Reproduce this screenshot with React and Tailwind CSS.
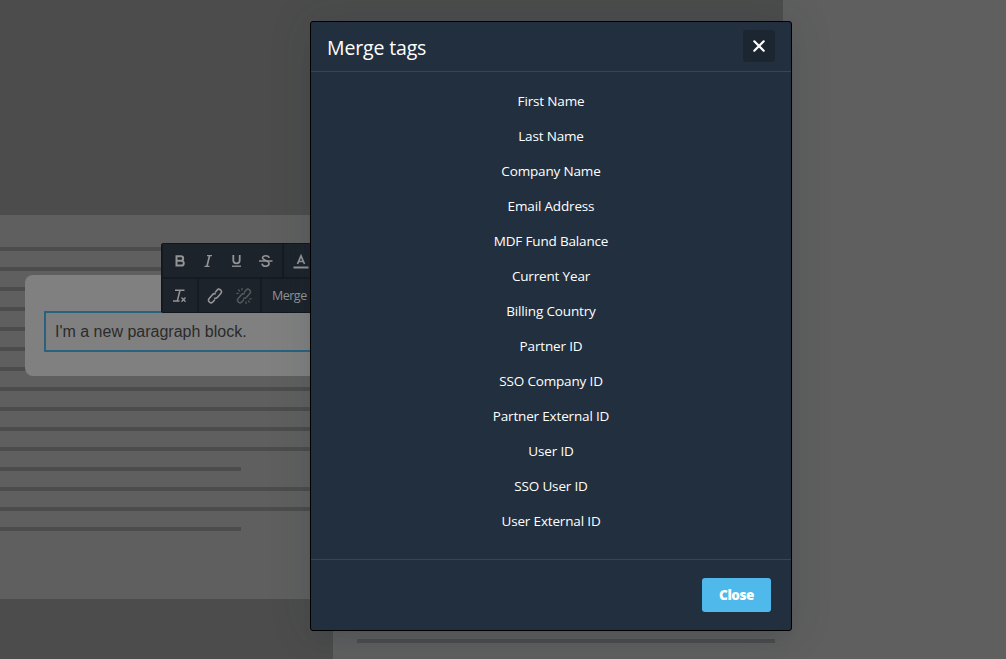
import React from 'react';

const tags = [
  'First Name',
  'Last Name',
  'Company Name',
  'Email Address',
  'MDF Fund Balance',
  'Current Year',
  'Billing Country',
  'Partner ID',
  'SSO Company ID',
  'Partner External ID',
  'User ID',
  'SSO User ID',
  'User External ID',
];

const lineWidths = Array.from({ length: 15 }, (_, i) => (i === 11 || i === 14 ? 241 : 450));

function Group({ className, children }) {
  return <div className={`flex h-full shrink-0 items-center bg-[#1c232b] text-[#929496] ${className}`}>{children}</div>;
}

const stroke = { fill: 'none', stroke: 'currentColor', strokeWidth: 1.6 };

function Icon({ children, className = '' }) {
  return (
    <svg width="16" height="16" viewBox="0 0 16 16" className={`shrink-0 ${className}`} {...stroke}>
      {children}
    </svg>
  );
}

function ChainLink() {
  return (
    <g transform="rotate(-50 8 8)" strokeWidth="1.6">
      <path d="M10 7.300C9.600 5.800 8.600 5.200 7.400 5.200H2.300a2.500 2.500 0 0 0 0 5h2.900" />
      <path d="M6 8.700c.4 1.500 1.400 2.100 2.600 2.100h5.100a2.500 2.500 0 0 0 0-5h-2.900" />
    </g>
  );
}

function Toolbar() {
  return (
    <div className="absolute left-[161px] top-[243px] flex h-[70px] w-[260px] flex-col gap-[2px] overflow-hidden rounded-[2px] border border-[#11161b] bg-[#151b21] pl-px">
      <div className="flex h-[33px] gap-[2px]">
        <Group className="w-[119px] gap-[12.500px] pl-[9px]">
          <Icon><path strokeWidth="2" d="M4.500 2.200v11.300M4.500 3.200h4.400a2.250 2.250 0 0 1 0 4.500h-4.400M4.500 7.800h4.900a2.350 2.350 0 0 1 0 4.700H4.500" /></Icon>
          <Icon><path strokeWidth="1.200" d="M6 2.600h5M3.500 13.400h5" /><path strokeWidth="1.700" d="M8.600 2.600L5.900 13.400" /></Icon>
          <Icon><path d="M4.300 2v5.200a3.200 3.200 0 0 0 6.400 0V2" strokeWidth="1.800" /><path d="M3 13.200h9" strokeWidth="1.400" /></Icon>
          <Icon><path d="M11.100 5c-.2-1.600-1.600-2.300-3.300-2.300-1.900 0-3.300.9-3.300 2.400C4.500 7.500 11.100 7 11.100 10.600c0 1.700-1.500 2.600-3.400 2.600-2 0-3.500-.9-3.600-2.600" /><path d="M1 8h13.500" strokeWidth="1.500" /></Icon>
        </Group>
        <Group className="w-[136px] pl-[9px]">
          <Icon><path d="M4.500 11L8 2.800l3.500 8.200M5.700 8.500h4.600" strokeWidth="1.700" /><path d="M.500 14.500h15" strokeWidth="2" /></Icon>
        </Group>
      </div>
      <div className="flex h-[33px] gap-[2px]">
        <Group className="w-[34px] pl-[9px]">
          <Icon><path d="M3 2.200h9.500M1 13h6.500M8 2.200L5.300 13" strokeWidth="1.500" /><path d="M9.500 9.500l4 4.300M13.500 9.500l-4 4.300" strokeWidth="1.300" /></Icon>
        </Group>
        <Group className="w-[61px] gap-[13px] pl-[8px]">
          <Icon><ChainLink /></Icon>
          <Icon className="text-[#53575c]">
            <ChainLink />
            <path strokeWidth="1.300" d="M.300 5.300h2.500M2.200 1.500l1.800 2M6 0v2.500M13.200 10.800h2.500M12 12.600l1.700 1.800M10 13.500V16" />
          </Icon>
        </Group>
        <Group className="w-[160px] pl-[10px]">
          <span className="pt-px font-['Open_Sans',sans-serif] text-[12.5px] font-medium tracking-[-0.5px]">Merge</span>
          <span className="ml-[3px] border-x-[4px] border-t-[4px] border-x-transparent border-t-[#8c8f92]" />
        </Group>
      </div>
    </div>
  );
}

function Canvas() {
  return (
    <div className="flex h-full">
      <div className="flex w-[783px] shrink-0 flex-col bg-[#4c4c4c]">
        <div className="h-[215px] shrink-0" />
        <div className="flex h-[384px] shrink-0 flex-col gap-4 bg-[#5f5f5f] pt-8">
          {lineWidths.map((width, i) => (
            <div key={i} className="h-1 shrink-0 bg-[#4c4c4c]" style={{ width }} />
          ))}
        </div>
        <div className="ml-[333px] h-[60px] bg-[#5f5f5f] pl-6 pt-10">
          <div className="h-1 w-[418px] bg-[#4c4c4c]" />
        </div>
      </div>
      <div className="flex-1 bg-[#5f5f5f]" />
    </div>
  );
}

function ParagraphBlock() {
  return (
    <div className="absolute left-[25px] top-[275px] h-[101px] w-[420px] rounded-lg bg-[#808080] pl-[19px] pt-9">
      <div className="flex h-[41px] items-center border-2 border-[#28627f] pl-[9px] font-['Liberation_Sans',Arial,sans-serif] text-base text-[#2b2b2b]">
        <span className="whitespace-nowrap">I'm a new paragraph block.</span>
      </div>
    </div>
  );
}

function MergeTagsDialog() {
  return (
    <div
      role="dialog"
      className="absolute left-[310px] top-[21px] flex h-[610px] w-[482px] flex-col rounded-[3px] border border-black bg-[#222f3e] font-['Open_Sans',sans-serif] text-white shadow-[0_16px_16px_-10px_rgba(34,47,62,0.15),0_0_40px_1px_rgba(34,47,62,0.15)]"
    >
      <header className="flex h-[50px] shrink-0 items-center justify-between border-b border-[#384553] pb-px pl-4 pr-4">
        <h1 className="whitespace-nowrap pt-[3px] text-[19.5px] font-medium leading-6 tracking-[-0.15px]">Merge tags</h1>
        <button aria-label="Close dialog" className="flex size-8 items-center justify-center rounded-[3px] bg-[#1c2630]">
          <svg width="12" height="12" viewBox="0 0 12 12" stroke="currentColor" strokeWidth="2.200" strokeLinecap="round">
            <path d="M1.300 1.300l9.400 9.400M10.700 1.300l-9.400 9.400" />
          </svg>
        </button>
      </header>
      <ul className="flex flex-1 flex-col items-center gap-[15px] pt-[19px] text-[13.5px] font-medium leading-5 tracking-[-0.16px]">
        {tags.map((label) => (
          <li key={label} className="whitespace-nowrap">{label}</li>
        ))}
      </ul>
      <footer className="flex h-[71px] shrink-0 items-center justify-end border-t border-[#384553] pr-5">
        <button className="flex h-[34px] w-[69px] items-center justify-center rounded-[3px] bg-[#4fb9ec] text-[13.5px] font-extrabold leading-5 tracking-[-0.45px]">
          Close
        </button>
      </footer>
    </div>
  );
}

export default function App() {
  return (
    <main className="relative h-[659px] w-[1006px] overflow-hidden">
      <Canvas />
      <ParagraphBlock />
      <Toolbar />
      <MergeTagsDialog />
    </main>
  );
}
